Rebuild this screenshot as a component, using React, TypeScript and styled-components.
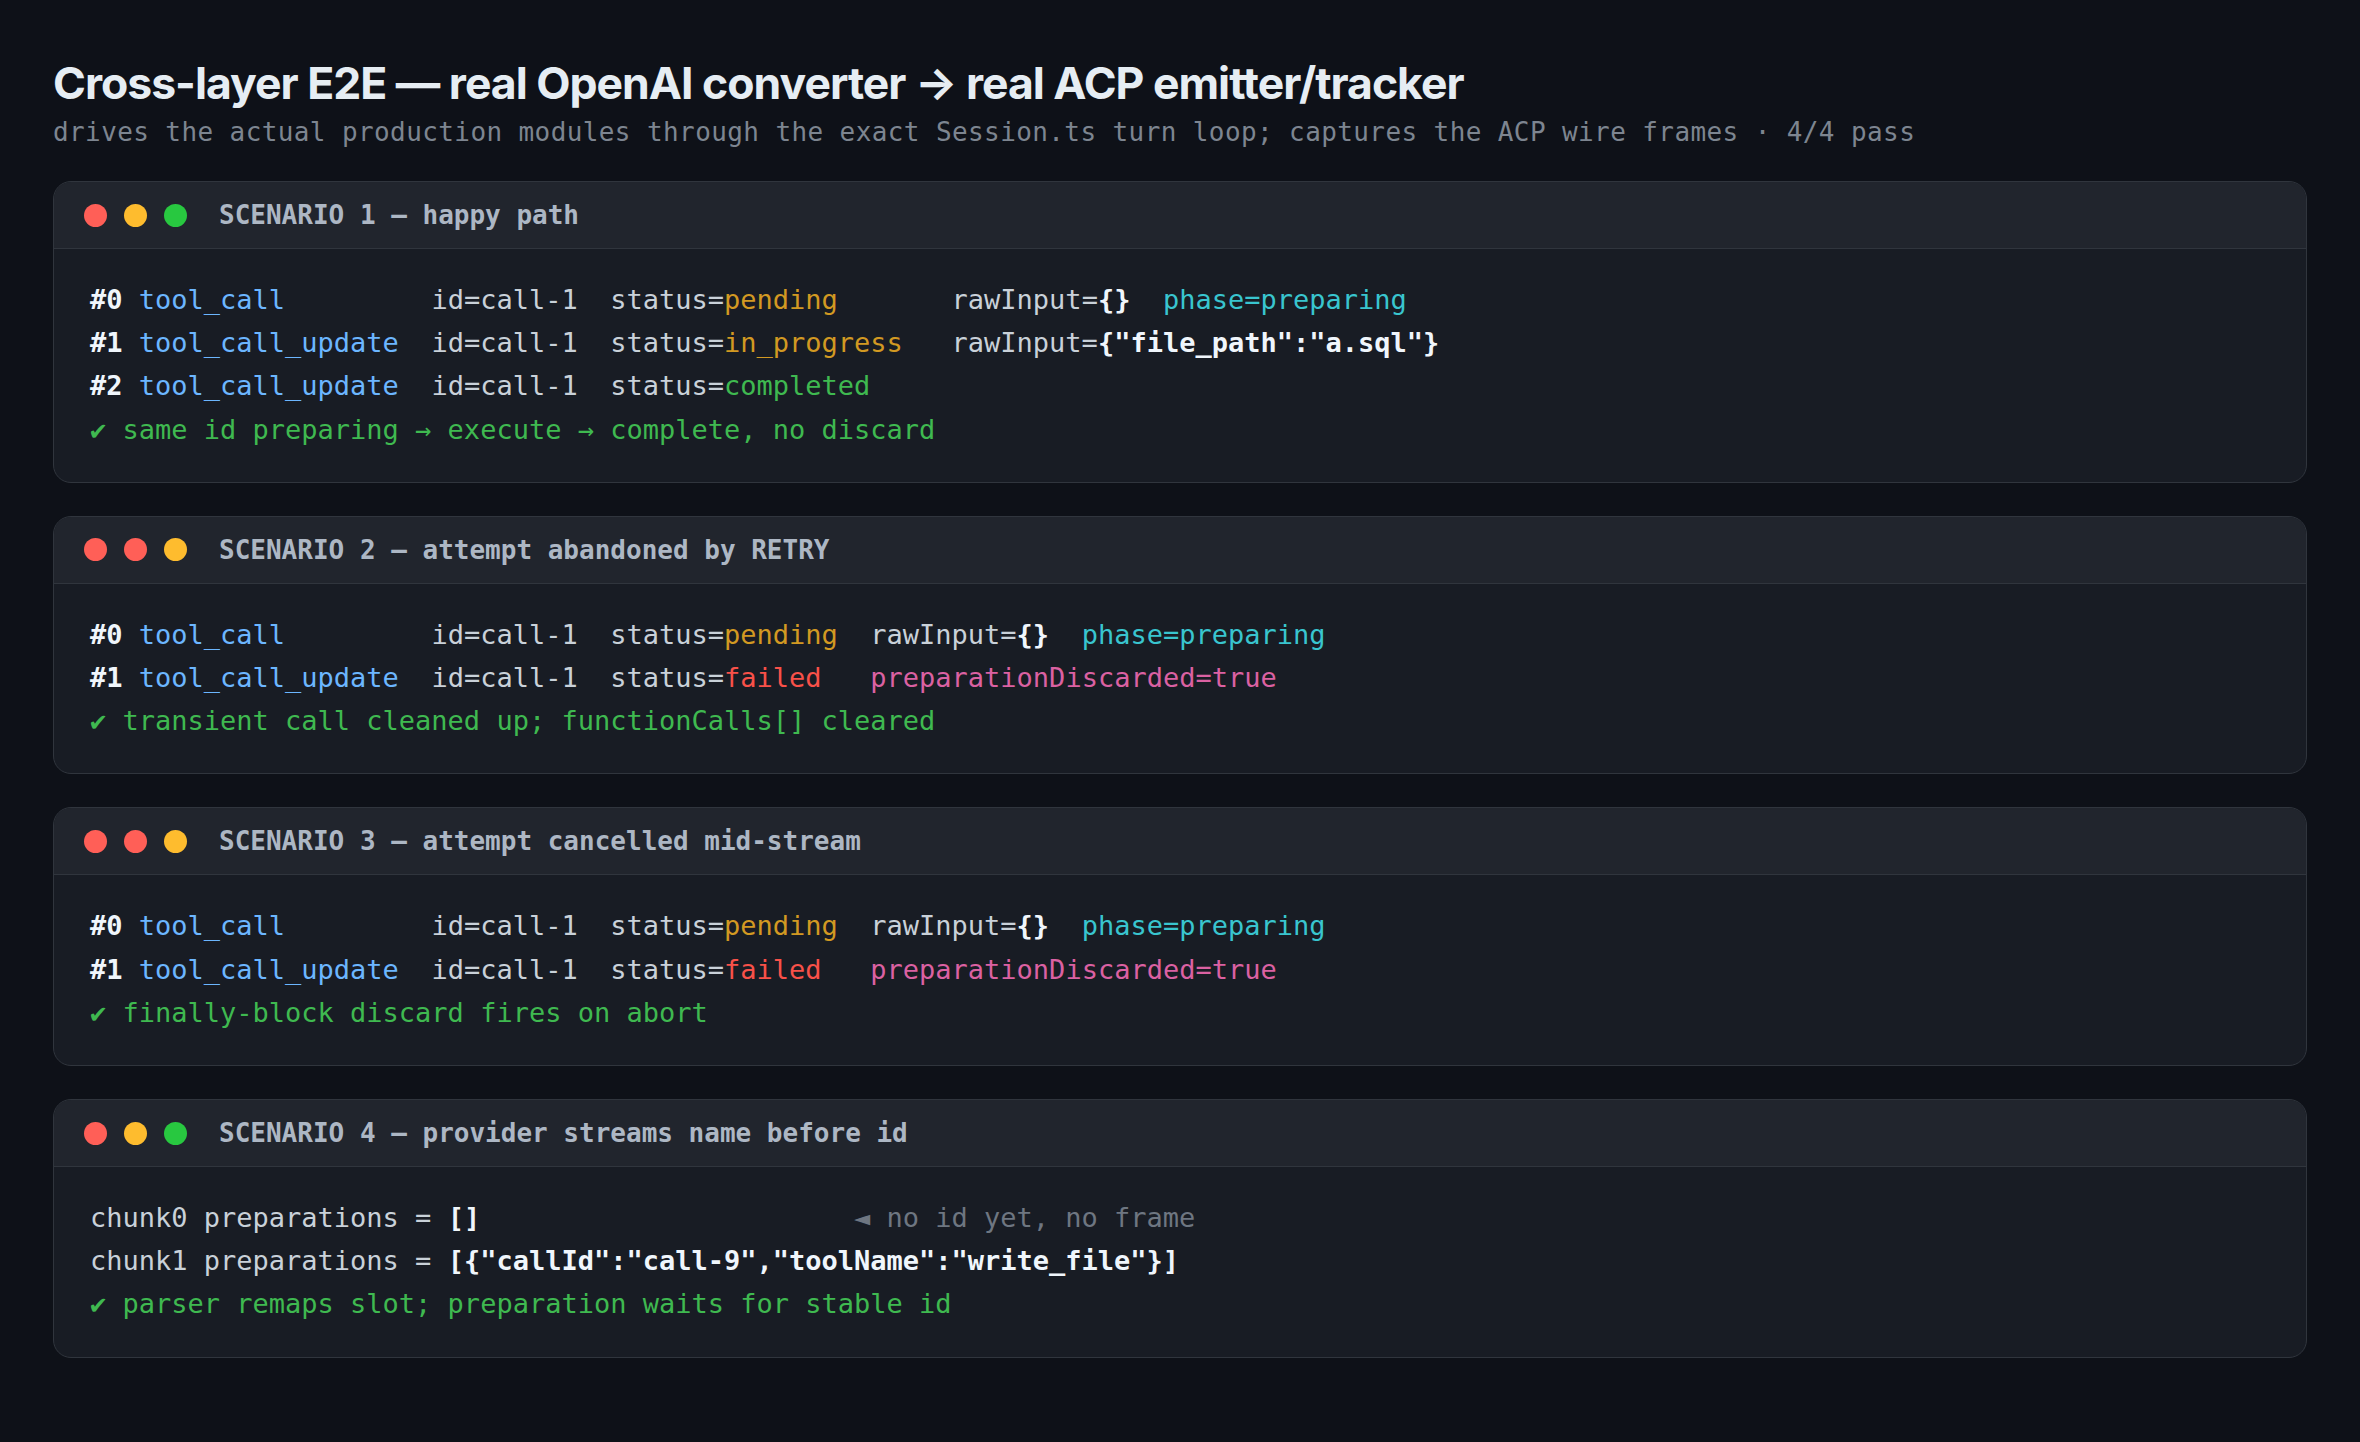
import React from "react";
import styled, { createGlobalStyle } from "styled-components";

const GlobalStyle = createGlobalStyle`
  html, body {
    margin: 0;
    padding: 0;
    background: #0e1118;
  }
  * { box-sizing: border-box; }
`;

const Page = styled.main`
  min-height: 1442px;
  background: #0e1118;
  padding: 56px 53px 60px;
  display: flex;
  flex-direction: column;
`;

const Title = styled.h1`
  margin: 0;
  font-family: Inter, "Liberation Sans", sans-serif;
  font-weight: 700;
  font-size: 44.5px;
  line-height: 54px;
  letter-spacing: -1px;
  color: #e6edf3;
`;

const Subtitle = styled.p`
  margin: 4px 0 0;
  font-family: "DejaVu Sans Mono", "Liberation Mono", monospace;
  font-size: 26px;
  line-height: 36px;
  letter-spacing: 0.4px;
  color: #7d8590;
`;

const CardList = styled.div`
  margin-top: 31px;
  display: flex;
  flex-direction: column;
  gap: 33px;
`;

const Card = styled.section`
  background: #181c24;
  border: 1.5px solid #30353d;
  border-radius: 18px;
  overflow: hidden;
`;

const CardHeader = styled.header`
  height: 67px;
  display: flex;
  align-items: center;
  padding: 0 30px;
  background: #21252d;
  border-bottom: 1.5px solid #30353d;
`;

const Dots = styled.div`
  display: flex;
  gap: 17px;
  margin-right: 32px;
`;

const Dot = styled.span<{ $c: string }>`
  width: 23px;
  height: 23px;
  border-radius: 50%;
  background: ${(p) => p.$c};
`;

const CardTitle = styled.h2`
  margin: 0;
  font-family: "DejaVu Sans Mono", "Liberation Mono", monospace;
  font-weight: 700;
  font-size: 26px;
  color: #adb7c4;
`;

const Body = styled.div`
  padding: 29px 36px 31px;
  font-family: "DejaVu Sans Mono", "Liberation Mono", monospace;
  font-size: 27px;
  line-height: 43.2px;
  color: #c9d1d9;
`;

const Line = styled.div`
  white-space: pre;
`;

const palette: Record<string, string> = {
  plain: "#c9d1d9",
  bold: "#f0f6fc",
  blue: "#6cb6ff",
  orange: "#d29922",
  green: "#3fb950",
  cyan: "#39c5cf",
  red: "#f85149",
  pink: "#db61a2",
  dim: "#6e7681",
};

const Seg = styled.span<{ $k: string }>`
  color: ${(p) => palette[p.$k]};
  font-weight: ${(p) => (p.$k === "bold" ? 700 : 400)};
`;

type S = [string, string];

const RED = "#ff5f57";
const YEL = "#febc2e";
const GRN = "#28c840";

const scenarios: { title: string; dots: string[]; lines: S[][] }[] = [
  {
    title: "SCENARIO 1 — happy path",
    dots: [RED, YEL, GRN],
    lines: [
      [
        ["bold", "#0"],
        ["plain", " "],
        ["blue", "tool_call"],
        ["plain", "         id=call-1  status="],
        ["orange", "pending"],
        ["plain", "       rawInput="],
        ["bold", "{}"],
        ["plain", "  "],
        ["cyan", "phase=preparing"],
      ],
      [
        ["bold", "#1"],
        ["plain", " "],
        ["blue", "tool_call_update"],
        ["plain", "  id=call-1  status="],
        ["orange", "in_progress"],
        ["plain", "   rawInput="],
        ["bold", '{"file_path":"a.sql"}'],
      ],
      [
        ["bold", "#2"],
        ["plain", " "],
        ["blue", "tool_call_update"],
        ["plain", "  id=call-1  status="],
        ["green", "completed"],
      ],
      [["green", "✔ same id preparing → execute → complete, no discard"]],
    ],
  },
  {
    title: "SCENARIO 2 — attempt abandoned by RETRY",
    dots: [RED, RED, YEL],
    lines: [
      [
        ["bold", "#0"],
        ["plain", " "],
        ["blue", "tool_call"],
        ["plain", "         id=call-1  status="],
        ["orange", "pending"],
        ["plain", "  rawInput="],
        ["bold", "{}"],
        ["plain", "  "],
        ["cyan", "phase=preparing"],
      ],
      [
        ["bold", "#1"],
        ["plain", " "],
        ["blue", "tool_call_update"],
        ["plain", "  id=call-1  status="],
        ["red", "failed"],
        ["plain", "   "],
        ["pink", "preparationDiscarded=true"],
      ],
      [["green", "✔ transient call cleaned up; functionCalls[] cleared"]],
    ],
  },
  {
    title: "SCENARIO 3 — attempt cancelled mid-stream",
    dots: [RED, RED, YEL],
    lines: [
      [
        ["bold", "#0"],
        ["plain", " "],
        ["blue", "tool_call"],
        ["plain", "         id=call-1  status="],
        ["orange", "pending"],
        ["plain", "  rawInput="],
        ["bold", "{}"],
        ["plain", "  "],
        ["cyan", "phase=preparing"],
      ],
      [
        ["bold", "#1"],
        ["plain", " "],
        ["blue", "tool_call_update"],
        ["plain", "  id=call-1  status="],
        ["red", "failed"],
        ["plain", "   "],
        ["pink", "preparationDiscarded=true"],
      ],
      [["green", "✔ finally-block discard fires on abort"]],
    ],
  },
  {
    title: "SCENARIO 4 — provider streams name before id",
    dots: [RED, YEL, GRN],
    lines: [
      [
        ["plain", "chunk0 preparations = "],
        ["bold", "[]"],
        ["plain", "                       "],
        ["dim", "◄ no id yet, no frame"],
      ],
      [
        ["plain", "chunk1 preparations = "],
        ["bold", '[{"callId":"call-9","toolName":"write_file"}]'],
      ],
      [["green", "✔ parser remaps slot; preparation waits for stable id"]],
    ],
  },
];

export default function App() {
  return (
    <>
      <GlobalStyle />
      <Page>
        <Title>Cross-layer E2E — real OpenAI converter → real ACP emitter/tracker</Title>
        <Subtitle>
          drives the actual production modules through the exact Session.ts turn loop; captures the ACP wire frames · 4/4 pass
        </Subtitle>
        <CardList>
          {scenarios.map((s, i) => (
            <Card key={i}>
              <CardHeader>
                <Dots>
                  {s.dots.map((c, j) => (
                    <Dot key={j} $c={c} />
                  ))}
                </Dots>
                <CardTitle>{s.title}</CardTitle>
              </CardHeader>
              <Body>
                {s.lines.map((l, j) => (
                  <Line key={j}>
                    {l.map(([k, t], m) => (
                      <Seg key={m} $k={k}>
                        {t}
                      </Seg>
                    ))}
                  </Line>
                ))}
              </Body>
            </Card>
          ))}
        </CardList>
      </Page>
    </>
  );
}
